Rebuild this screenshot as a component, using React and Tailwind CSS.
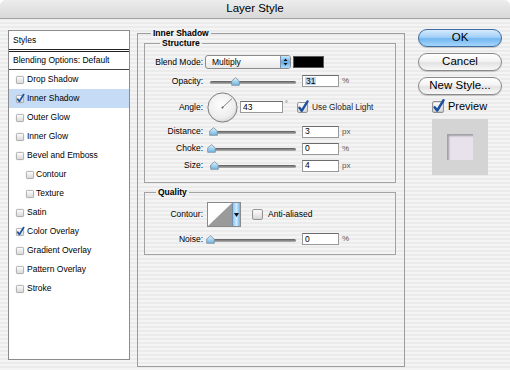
import React from "react";

const items = [
  { label: "Drop Shadow" },
  { label: "Inner Shadow", checked: true, active: true },
  { label: "Outer Glow" },
  { label: "Inner Glow" },
  { label: "Bevel and Emboss" },
  { label: "Contour", sub: true },
  { label: "Texture", sub: true },
  { label: "Satin" },
  { label: "Color Overlay", checked: true },
  { label: "Gradient Overlay" },
  { label: "Pattern Overlay" },
  { label: "Stroke" },
];

function Box({ size = 8, checked }) {
  return (
    <svg width={size} height={size} viewBox="0 0 10 10" className="overflow-visible shrink-0">
      <defs>
        <linearGradient id="cbg" x1="0" y1="0" x2="0" y2="1">
          <stop offset="0" stopColor="#ffffff" />
          <stop offset="1" stopColor="#d6d6d6" />
        </linearGradient>
      </defs>
      <rect x="0.5" y="0.5" width="9" height="9" rx="1.2" fill="url(#cbg)" stroke="#8f8f8f" strokeWidth="0.9" />
      {checked && (
        <path
          d="M2.2 5.2 L4.3 8 L9.6 -0.6"
          fill="none"
          stroke="#1c4f9e"
          strokeWidth="2.1"
          strokeLinecap="round"
          strokeLinejoin="round"
        />
      )}
    </svg>
  );
}

function Slider({ pos }) {
  // pos = thumb centre, px from track start
  return (
    <div className="relative w-[86px] h-[9px] ml-[7px]">
      <div className="absolute left-0 right-0 top-[4px] h-[3px] rounded-full bg-[linear-gradient(to_bottom,#5a5a5a,#b4b4b4)]" />
      <svg width="9" height="9" viewBox="0 0 9 9" className="absolute top-0" style={{ left: pos - 4 }}>
        <defs>
          <linearGradient id="thg" x1="0" y1="0" x2="0" y2="1">
            <stop offset="0" stopColor="#e3f3fd" />
            <stop offset="1" stopColor="#6ab6e6" />
          </linearGradient>
        </defs>
        <path d="M4.5 0.6 L8.3 4 L8.3 8.3 L0.7 8.3 L0.7 4 Z" fill="url(#thg)" stroke="#7d8a96" strokeWidth="0.8" strokeLinejoin="round" />
      </svg>
    </div>
  );
}

function Field({ value, w = "w-[37px]", sel }) {
  return (
    <div className={`${w} h-[12px] bg-white border border-[#9a9a9a] border-t-[#6c6c6c] flex items-center pl-[2px] text-[8.5px] leading-none`}>
      {sel ? <span className="bg-[#bcd8f7] px-[1px]">{value}</span> : value}
    </div>
  );
}

function Label({ children }) {
  return <div className="w-[58px] text-right text-[8.5px] leading-none shrink-0">{children}</div>;
}

function SliderRow({ label, pos, value, unit, h = "h-[17px]", sel }) {
  return (
    <div className={`flex items-center ${h}`}>
      <Label>{label}</Label>
      <Slider pos={pos} />
      <div className="ml-[6px]">
        <Field value={value} sel={sel} />
      </div>
      <span className="ml-[3px] text-[8px] text-[#555]">{unit}</span>
    </div>
  );
}

function Dial() {
  return (
    <svg width="31" height="31" viewBox="0 0 31 31" className="ml-[4px] shrink-0">
      <defs>
        <radialGradient id="dialg" cx="0.45" cy="0.4" r="0.65">
          <stop offset="0" stopColor="#fdfdfd" />
          <stop offset="0.7" stopColor="#eeeeee" />
          <stop offset="1" stopColor="#cfcfcf" />
        </radialGradient>
      </defs>
      <circle cx="15.5" cy="15.5" r="14.6" fill="url(#dialg)" stroke="#7d7d7d" strokeWidth="1" />
      <line x1="15.5" y1="15.5" x2="25" y2="6.6" stroke="#666" strokeWidth="0.8" />
      <circle cx="15.5" cy="15.5" r="1" fill="#555" />
    </svg>
  );
}

function Btn({ children, primary, className = "" }) {
  return (
    <div
      className={`h-[18px] w-[84px] rounded-full border flex items-center justify-center text-[11.5px] leading-none shadow-[0_1px_1px_rgba(0,0,0,0.18)] ${
        primary
          ? "border-[#3f6c9e] bg-[linear-gradient(to_bottom,#d4eafd_0%,#a3d0f7_45%,#73b7f1_55%,#a6d6fb_100%)]"
          : "border-[#8a8a8a] bg-[linear-gradient(to_bottom,#ffffff_0%,#f3f3f3_45%,#e2e2e2_55%,#f8f8f8_100%)]"
      } ${className}`}
    >
      {children}
    </div>
  );
}

export default function App() {
  return (
    <div className="w-[510px] h-[370px] overflow-hidden bg-white font-['Liberation_Sans',Arial,sans-serif] text-black">
      <div className="w-full h-full rounded-t-[6px] overflow-hidden bg-[repeating-linear-gradient(to_bottom,#f4f4f4_0px,#f4f4f4_2px,#ebebeb_2px,#ebebeb_4px)]">
        {/* Title bar */}
        <div className="h-[19px] border-b border-[#a3a3a3] bg-[linear-gradient(to_bottom,#ededed,#d8d8d8)] flex items-center justify-center text-[11.5px] leading-none">
          Layer Style
        </div>

        <div className="flex items-start pl-[8px] pt-[9px]">
          {/* Styles list */}
          <div className="mt-[2px] w-[122px] h-[330px] bg-white border border-[#8c8c8c] text-[8.5px] leading-none">
            <div className="h-[18px] flex items-center pl-[4px]">Styles</div>
            <div className="border-b-[3px] border-double border-[#222]" />
            <div className="h-[17px] flex items-center pl-[4px] border-b border-[#444] box-content">Blending Options: Default</div>
            {items.map((it) => (
              <div
                key={it.label}
                className={`h-[19px] flex items-center ${it.sub ? "pl-[17px]" : "pl-[7px]"} ${it.active ? "bg-[#c6dcf6]" : ""}`}
              >
                <Box size={8} checked={it.checked} />
                <span className={it.sub ? "ml-[2px]" : "ml-[3px]"}>{it.label}</span>
              </div>
            ))}
          </div>

          {/* Main settings */}
          <fieldset className="ml-[7px] w-[268px] h-[339px] border border-[#9c9c9c]">
            <legend className="ml-[13px] px-[2px] text-[8.5px] leading-[10px] font-bold">Inner Shadow</legend>

            <fieldset className="ml-[6px] w-[252px] border border-[#a2a2a2] pb-[8px]">
              <legend className="ml-[15px] px-[2px] text-[8.5px] leading-[10px] font-bold">Structure</legend>
              <div className="pt-[6px]">
                <div className="flex items-center h-[16px]">
                  <Label>Blend Mode:</Label>
                  <div className="ml-[2px] w-[86px] h-[14px] rounded-[3px] border border-[#8b8b8b] bg-[linear-gradient(to_bottom,#ffffff,#e9e9e9)] flex items-center overflow-hidden">
                    <span className="flex-1 pl-[6px] text-[8.5px] leading-none">Multiply</span>
                    <div className="w-[10px] h-full border-l border-[#7d91a8] bg-[linear-gradient(to_bottom,#cde6fc,#62aced_50%,#addafc)] flex items-center justify-center">
                      <svg width="5" height="8" viewBox="0 0 5 8">
                        <path d="M2.5 0.5 L4.5 3 L0.5 3 Z M2.5 7.5 L4.5 5 L0.5 5 Z" fill="#111" />
                      </svg>
                    </div>
                  </div>
                  <div className="ml-[2px] w-[31px] h-[12px] bg-black border border-[#5a5a5a]" />
                </div>

                <div className="mt-[3px]">
                  <SliderRow label="Opacity:" pos={25} value="31" unit="%" h="h-[16px]" sel />
                </div>

                <div className="mt-[2px] flex items-center h-[32px]">
                  <Label>Angle:</Label>
                  <Dial />
                  <div className="ml-[2px]">
                    <Field value="43" w="w-[43px]" />
                  </div>
                  <span className="ml-[2px] w-[12px] self-start mt-[9px] text-[7px] leading-none text-[#555]">°</span>
                  <Box size={11} checked />
                  <span className="ml-[4px] text-[8.3px] leading-none font-normal text-[#222]">Use Global Light</span>
                </div>

                <SliderRow label="Distance:" pos={3} value="3" unit="px" />
                <SliderRow label="Choke:" pos={1} value="0" unit="%" />
                <SliderRow label="Size:" pos={4} value="4" unit="px" />
              </div>
            </fieldset>

            <fieldset className="mt-[4px] ml-[6px] w-[252px] border border-[#a2a2a2] pb-[7px]">
              <legend className="ml-[11px] px-[2px] text-[8.5px] leading-[10px] font-bold">Quality</legend>
              <div className="pt-[5px]">
                <div className="flex items-center h-[25px]">
                  <Label>Contour:</Label>
                  <div className="ml-[4px] w-[34px] h-[25px] border border-[#8a8a8a] flex overflow-hidden">
                    <svg width="24" height="23" viewBox="0 0 24 23" className="shrink-0">
                      <rect width="24" height="23" fill="#fff" />
                      <path d="M0 23 L24 0 L24 23 Z" fill="#9a9a9a" />
                    </svg>
                    <div className="flex-1 border-l border-[#6f8fb3] bg-[linear-gradient(to_right,#8cc8f4,#cfe9fd,#6db5ee)] flex items-center justify-center">
                      <svg width="5" height="4" viewBox="0 0 5 4">
                        <path d="M0 0 L5 0 L2.5 4 Z" fill="#111" />
                      </svg>
                    </div>
                  </div>
                  <div className="ml-[11px]">
                    <Box size={11} />
                  </div>
                  <span className="ml-[5px] text-[8.5px] leading-none">Anti-aliased</span>
                </div>
                <div className="mt-[4px]">
                  <SliderRow label="Noise:" pos={0} value="0" unit="%" h="h-[16px]" />
                </div>
              </div>
            </fieldset>
          </fieldset>

          {/* Buttons */}
          <div className="ml-[13px] mt-[1px] flex flex-col">
            <Btn primary>OK</Btn>
            <Btn className="mt-[6px]">Cancel</Btn>
            <Btn className="mt-[6px]">New Style...</Btn>
            <div className="mt-[5px] ml-[14px] h-[13px] flex items-center">
              <Box size={12} checked />
              <span className="ml-[4px] text-[11px] leading-none">Preview</span>
            </div>
            <div className="mt-[6px] ml-[14px] w-[56px] h-[56px] bg-[#d4d4d4] flex items-center justify-center">
              <div className="w-[26px] h-[26px] bg-[#e7e2ec] shadow-[inset_2px_2px_2px_rgba(0,0,0,0.3)]" />
            </div>
          </div>
        </div>
      </div>
    </div>
  );
}
